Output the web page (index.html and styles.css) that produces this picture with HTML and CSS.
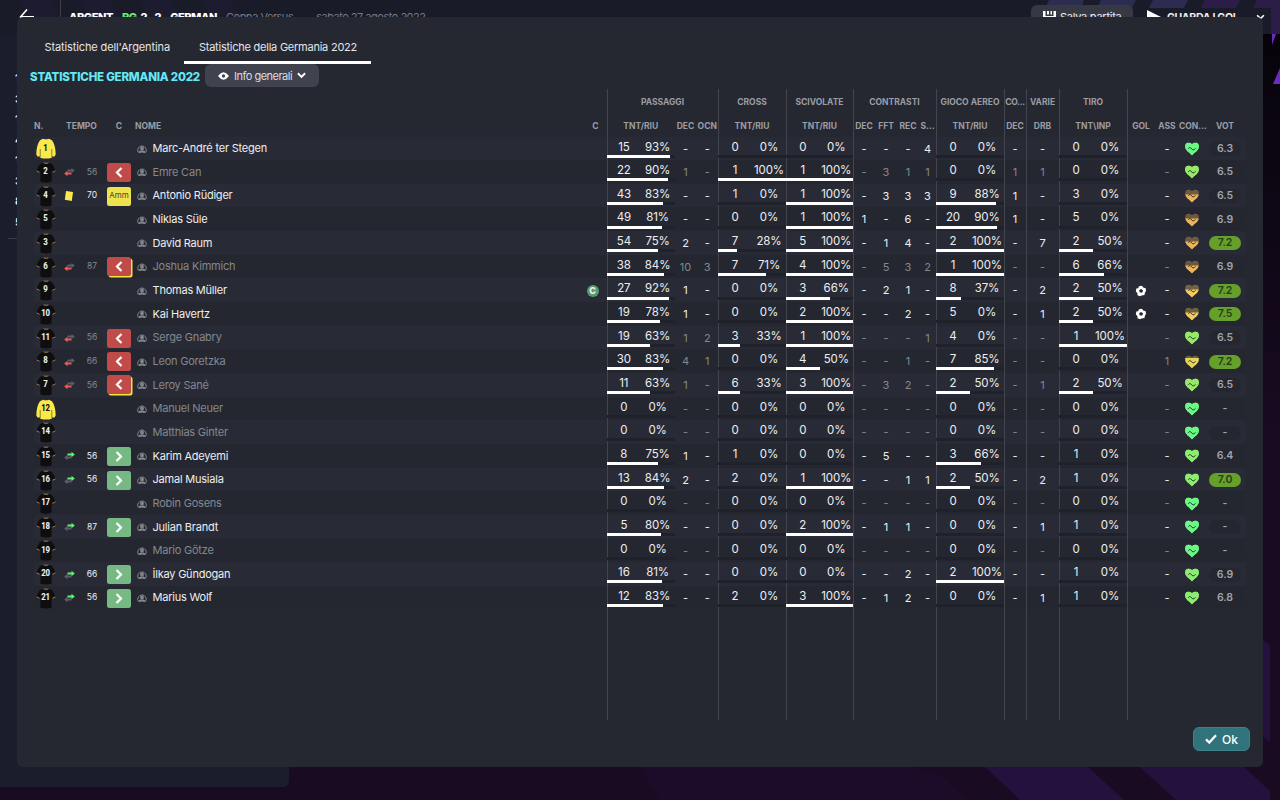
FILE: index.html
```html
<!DOCTYPE html>
<html lang="it">
<head>
  <meta charset="UTF-8">
  <meta name="viewport" content="width=device-width, initial-scale=1.0">
  <title>Statistiche Germania 2022</title>
  <link rel="stylesheet" href="styles.css">
</head>
<body>
  <!-- Backdrop stripes -->
  <svg class="backdrop" viewBox="0 0 1280 800" aria-hidden="true">
    <linearGradient id="edge" x1="0" y1="0" x2="0" y2="1">
      <stop offset="0" stop-color="#050308"/><stop offset="1" stop-color="#180b22"/>
    </linearGradient>
    <rect width="1280" height="800" fill="#180b22"/>
    <rect x="1262" y="0" width="18" height="440" fill="url(#edge)"/>
    <path d="M640 767H911L942 776L968 800H660Z" fill="#1c0c2a"/>
    <path d="M985 767H1088L1124 800H1020ZM1140 767H1244L1270 791V800H1176Z" fill="#24113d"/>
    <path d="M1262 639L1270 645V742L1262 736Z" fill="#24113d"/>
    <path d="M1262 0H1280V34H1262Z" fill="#261f42"/>
    <path d="M1272 34H1276L1272 45Z" fill="#6a2bc0"/>
    <path d="M1280 68V84H1273Z" fill="#6a2bc0"/>
  </svg>

  <!-- Match screen behind the dialog -->
  <header class="topbar">
    <svg class="topbar-stripes" viewBox="0 0 1280 34" aria-hidden="true">
      <g fill="#241c3a" opacity=".45">
        <path d="M20 0H50L70 34H40ZM80 0H110L130 34H100ZM140 0H170L190 34H160ZM200 0H230L250 34H220Z"/>
      </g>
      <path d="M1049 0H1084L1081 8H1045ZM1101 0H1136L1132 8H1097ZM1153 0H1188L1184 8H1149Z" fill="#2b2c50"/>
      <path d="M1205 0H1240L1236 8H1201ZM1257 0H1280V34H1271V8H1253Z" fill="#2c1d48"/>
    </svg>
    <svg class="back" viewBox="0 0 16 16"><path d="M8 .5L1.500 8L8 15.500M1.500 7.700H15" fill="none" stroke="#fff" stroke-width="1.6"/></svg>
    <div class="score"><b>ARGENT</b><b class="green">RG</b><b class="result"><span>2</span><span>-</span><span>2</span></b><b>GERMAN</b></div>
    <span class="cup">Coppa Versus</span>
    <span class="date">sabato 27 agosto 2022</span>
    <div class="save">
      <svg viewBox="0 0 13 13"><path d="M0 0H2.5V5H10.5V0H13V13H0ZM4 0H6V3.5H4ZM7.5 0H9V3.5H7.5Z" fill="#fff"/></svg>
      <span>Salva partita</span>
    </div>
    <div class="watch">
      <svg class="play" viewBox="0 0 14 14"><path d="M0 0L14 7L0 14Z" fill="#fff"/></svg>
      <b>GUARDA I GOL</b>
      <svg class="chev" viewBox="0 0 8 6"><path d="M1 1L4 4L7 1" fill="none" stroke="#fff" stroke-width="1.5"/></svg>
    </div>
  </header>
  <aside class="side">
    <ul><li>1</li><li>3</li><li>1</li><li>4</li><li>1</li><li>3</li><li>8</li><li>5</li></ul>
  </aside>

  <svg width="0" height="0" class="defs">
    <symbol id="shirt" viewBox="0 0 20 21">
      <path d="M7 .8Q10 2 13 .8L16 2.3Q18 4.500 19.600 9L16.500 10.300L15.600 8.500V19.500Q10 21.300 4.400 19.500V8.500L3.500 10.300L.4 9Q2 4.500 4 2.300Z" fill="#0e0e0f"/>
      <path d="M7.500 .9Q10 1.700 12.500 .9M.5 8.900L3.500 10.200M19.500 8.900L16.500 10.200" fill="none" stroke="#a07a4e" stroke-width="1"/>
    </symbol>
    <symbol id="keeper" viewBox="0 0 20 21">
      <path d="M7 .8Q10 1.800 13 .8L16 2.300Q19.500 7 19.700 16.500L18.500 18.500H15.800V19.700Q10 21.500 4.200 19.700V18.500H1.500L.3 16.500Q.5 7 4 2.300Z" fill="#fbe94b"/>
      <path d="M4.200 11V19M15.800 11V19" stroke="#6f6726" stroke-width=".8"/>
    </symbol>
    <symbol id="swap-out" viewBox="0 0 11 9">
      <path d="M3.500 2H7.500V.5L10.800 3L7.500 5.500V4H3.500Z" fill="#5b5e68"/>
      <path d="M7.500 5H3.500V3.300L.2 6L3.500 8.700V7.100H7.500Z" fill="#ee5b57"/>
    </symbol>
    <symbol id="swap-in" viewBox="0 0 11 9">
      <path d="M7.500 5H3.500V3.300L.2 6L3.500 8.700V7.100H7.500Z" fill="#5b5e68"/>
      <path d="M3.500 2H7.500V.3L10.800 3L7.500 5.700V4.100H3.500Z" fill="#5ff377"/>
    </symbol>
    <symbol id="card" viewBox="0 0 11 10">
      <path d="M2 .1L9 1L7.800 9.900L.8 8.800Z" fill="#f9e84c"/>
    </symbol>
    <symbol id="person" viewBox="0 0 10 10">
      <path d="M1.200 8.300A4.300 4.300 0 1 1 8.800 8.300" fill="none" stroke="#85878e" stroke-width="1"/>
      <circle cx="5" cy="4.500" r="1.900" fill="#85878e"/>
      <path d="M1.200 8.800Q1.600 7 3.600 6.600H6.400Q8.400 7 8.800 8.800L7.200 9Q5 7.800 2.800 9Z" fill="#85878e"/>
    </symbol>
    <symbol id="ball" viewBox="0 0 12 12">
      <path d="M4 1.300L7 .8L8.200 2.600L10.700 3.200L11 6L9.800 8L9.500 10L6.500 10.500L5 11.300L2.500 10.200L2.400 8L.8 6.500L1.300 3.500L3.200 3.300Z" fill="#fff"/>
      <path d="M6 4L8 5.300L7.400 7.600H4.800L4.100 5.300Z" fill="#252831"/>
    </symbol>
    <symbol id="pulse" viewBox="0 0 14 13">
      <path d="M3.300 6.300Q4.500 4.300 5.600 5.400L7.800 7.300Q9 8 10.500 5.800" fill="none" stroke="#252831" stroke-width=".9"/>
    </symbol>
    <symbol id="heart" viewBox="0 0 14 13">
      <path d="M7 1.800Q8.300 0 10.600 0Q13.900 .4 13.900 4.100C13.700 8.300 9.500 10 7 13C4.500 10 .3 8.300 .1 4.100Q.1 .4 3.400 0Q5.700 0 7 1.800Z"/>
    </symbol>
  </svg>

  <!-- Dialog -->
  <main class="dialog">
    <nav class="tabs">
      <a class="tab">Statistiche dell'Argentina</a>
      <a class="tab active">Statistiche della Germania 2022</a>
    </nav>
    <div class="title-row">
      <h1>STATISTICHE GERMANIA 2022</h1>
      <button class="view">
        <svg class="eye" viewBox="0 0 12 8"><path d="M0 4Q6 -4 12 4Q6 12 0 4Z" fill="#fff"/><circle cx="6" cy="4" r="1.800" fill="#40434d"/></svg>
        <span>Info generali</span>
        <svg class="chev" viewBox="0 0 8 6"><path d="M.8 1L4 4.200L7.200 1" fill="none" stroke="#fff" stroke-width="1.700"/></svg>
      </button>
    </div>

    <section class="table">
      <div class="groups">
        <span></span><span class="sep">PASSAGGI</span><span class="sep">CROSS</span><span class="sep">SCIVOLATE</span>
        <span class="sep">CONTRASTI</span><span class="sep">GIOCO AEREO</span><span class="sep tight">CO...</span>
        <span class="sep">VARIE</span><span class="sep">TIRO</span><span class="sep"></span>
      </div>
      <div class="grid head">
        <span class="left">N.</span><span class="tempo">TEMPO</span><span>C</span><span class="left">NOME</span><span class="cap-head">C</span>
        <span class="sep">TNT/RIU</span><span>DEC</span><span>OCN</span>
        <span class="sep">TNT/RIU</span><span class="sep">TNT/RIU</span>
        <span class="sep">DEC</span><span>FFT</span><span>REC</span><span>S...</span>
        <span class="sep">TNT/RIU</span><span class="sep">DEC</span><span class="sep">DRB</span>
        <span class="sep">TNT\INP</span><span class="sep">GOL</span><span>ASS</span><span>CON...</span><span>VOT</span>
      </div>
      <div id="rows"></div>
      <div class="groups rest">
        <span></span><span class="sep"></span><span class="sep"></span><span class="sep"></span><span class="sep"></span>
        <span class="sep"></span><span class="sep"></span><span class="sep"></span><span class="sep"></span><span class="sep"></span>
      </div>
    </section>

    <footer>
      <button class="ok">
        <svg viewBox="0 0 12 10"><path d="M1 5.300L4.300 8.500L11 1.200" fill="none" stroke="#fff" stroke-width="2.300"/></svg>
        <span>Ok</span>
      </button>
    </footer>
  </main>

  <script src="script.js"></script>
</body>
</html>
```
FILE: styles.css
```css
* {
  margin: 0;
  padding: 0;
  box-sizing: border-box;
}

body {
  width: 1280px;
  height: 800px;
  overflow: hidden;
  position: relative;
  background: #180b22;
  color: #eeeef0;
  font-family: Inter, "Liberation Sans", sans-serif;
  font-size: 11px;
}

svg {
  display: block;
  flex: none;
}

.defs {
  position: absolute;
}

.backdrop {
  position: absolute;
  inset: 0;
  width: 1280px;
  height: 800px;
}

/* Match screen behind the dialog */
.topbar {
  position: relative;
  height: 34px;
  width: 1271px;
  background: #191b28;
  display: flex;
  align-items: center;
  padding-left: 19px;
  white-space: nowrap;
}

.topbar-stripes {
  position: absolute;
  left: 0;
  top: 0;
  width: 1280px;
  height: 34px;
}

.topbar > * {
  z-index: 1;
}

.topbar > .topbar-stripes {
  z-index: 0;
}

.back {
  width: 16px;
  height: 16px;
}

.score {
  display: flex;
  gap: 9px;
  width: 157px;
  margin-left: 25px;
  padding-left: 8px;
  height: 34px;
  align-items: center;
  border-left: 1px solid #3c3d4b;
  font-size: 11px;
  letter-spacing: -0.45px;
  color: #fff;
}

.score b {
  font-weight: 800;
}

.score .green {
  color: #68ec72;
  margin-right: -5px;
}

.score .result {
  display: flex;
  justify-content: space-between;
  width: 21px;
}

.cup,
.date {
  color: #777985;
  margin-left: 9px;
  letter-spacing: -0.5px;
}

.date {
  margin-left: 23px;
}

.save {
  display: flex;
  align-items: center;
  gap: 4px;
  width: 102px;
  height: 24px;
  padding-left: 12px;
  margin-left: auto;
  border-radius: 6px;
  background: #363843;
  letter-spacing: -0.25px;
}

.save svg {
  width: 13px;
  height: 13px;
}

.watch {
  display: flex;
  align-items: center;
  width: 124px;
  margin: 0 0 0 14px;
}

.watch b {
  margin-left: 6px;
  font-size: 10.5px;
  letter-spacing: -0.3px;
}

.play {
  width: 14px;
  height: 14px;
}

.watch .chev {
  width: 9px;
  height: 7px;
  margin-left: auto;
  margin-right: 6px;
}

.side {
  width: 289px;
  height: 753px;
  position: relative;
  border-radius: 0 0 6px 0;
  background: #1c1d2c;
}

.side ul {
  list-style: none;
  width: 30px;
  margin-left: 8px;
  padding: 34px 0 6px 7px;
  border-bottom: 1px solid #3a3c49;
}

.side li {
  height: 20.5px;
  line-height: 20.5px;
  font-weight: 700;
}

/* Dialog */
.dialog {
  position: absolute;
  z-index: 2;
  left: 17px;
  top: 17px;
  width: 1246px;
  height: 750px;
  border-radius: 6px;
  background: #252831;
  display: flex;
  flex-direction: column;
}

.tabs {
  display: flex;
  height: 47px;
  padding: 13px 0 0 13px;
}

.tab {
  height: 34px;
  padding: 0 14.5px;
  line-height: 34px;
  letter-spacing: -0.12px;
  color: #e4e5e8;
}

.tab.active {
  padding-right: 14px;
  letter-spacing: -0.24px;
  border-bottom: 3px solid #fff;
}

.title-row {
  display: flex;
  align-items: center;
  height: 25px;
  padding-left: 13px;
}

h1 {
  width: 175px;
  font-size: 11.5px;
  font-weight: 800;
  white-space: nowrap;
  letter-spacing: -0.2px;
  color: #64e9f5;
}

.view {
  display: flex;
  align-items: center;
  width: 114px;
  height: 23px;
  margin-top: -2px;
  padding: 0 13px;
  border: 0;
  border-radius: 6px;
  background: #40434d;
  color: #dcdde0;
  font: inherit;
  letter-spacing: -0.5px;
  white-space: nowrap;
}

.eye {
  width: 11px;
  height: 8px;
  margin-right: 5px;
}

.view .chev {
  width: 9px;
  height: 7px;
  margin-left: auto;
}

/* Table */
.table {
  height: 631px;
  margin-left: 17px;
  display: flex;
  flex-direction: column;
}

.sep {
  box-shadow: inset 1px 0 #42444e;
}

.groups {
  display: grid;
  flex: none;
  height: 25px;
  grid-template-columns: 573px 111px 68px 67px 83px 68px 22px 33px 68px 119px;
}

.groups,
.head {
  font-size: 8.5px;
  font-weight: 700;
  color: #9c9da3;
  text-align: center;
  line-height: 27px;
  white-space: nowrap;
}

.rest {
  flex: 1;
}

.groups .tight {
  letter-spacing: -0.3px;
}

.grid {
  display: grid;
  grid-template-columns: 23px 24px 22px 32px 447px 25px 67.5px 22px 21.5px 68px 67px 22px 22px 22px 17px 68px 22px 33px 68px 28px 24px 25px 42px;
}

.head {
  height: 22.5px;
  line-height: 24px;
}

.head .tempo {
  grid-column: span 2;
  padding-left: 3px;
}

.head .left {
  text-align: left;
}

.head .cap-head {
  padding-left: 2px;
}

.row {
  height: 23.66px;
  line-height: 23.66px;
  width: 1212px;
  border-radius: 4px;
  text-align: center;
  background: #242730;
}

.row:nth-child(odd) {
  background: #282b35;
}

.row > div {
  display: flex;
  align-items: center;
  justify-content: center;
  position: relative;
}

.row .name {
  justify-content: flex-start;
  padding-left: 2px;
  gap: 5.5px;
  font-size: 11px;
  letter-spacing: -0.22px;
}

.name svg {
  width: 10px;
  height: 10px;
}

.shirt svg {
  width: 20px;
  height: 21px;
}

.shirt span {
  position: absolute;
  inset: -1px 0 0;
  font-family: Roboto, sans-serif;
  font-size: 9.5px;
  font-weight: 800;
  letter-spacing: -0.3px;
  transform: scaleX(0.82);
}

.shirt.gk span {
  color: #111;
}

.event svg {
  width: 11px;
  height: 10px;
}

.minute {
  font-size: 8.5px;
}

.badge {
  width: 24px;
  height: 19px;
  border-radius: 2.5px;
  display: flex;
  align-items: center;
  justify-content: center;
}

.badge svg {
  width: 8px;
  height: 11px;
}

.badge.out,
.badge.booked {
  background: #c04b49;
}

.badge.booked {
  margin: -1px 0 0 -1px;
  box-shadow: 1.5px 1.5px #f5e43c;
}

.badge.in {
  background: #77b982;
}

.badge.amm {
  background: #eee24f;
  color: #4b4a25;
  font-size: 8px;
}

.captain {
  width: 12px;
  height: 12px;
  margin-right: 4px;
  border-radius: 50%;
  background: #559b6c;
  font-size: 9px;
  font-weight: 800;
  line-height: 12px;
}

.row .pct {
  display: grid;
  grid-template-columns: 1fr 1fr;
  justify-content: stretch;
  font-size: 11.5px;
  letter-spacing: -0.1px;
  line-height: 21px;
  align-items: start;
}

.track {
  position: absolute;
  left: 0;
  right: 0;
  bottom: 3.6px;
  height: 3px;
  background: #20222b;
}

.fill {
  height: 3px;
  background: #fff;
}

.num {
  padding-top: 1px;
}

.row.dim .name,
.row.dim .num,
.row.dim .minute {
  color: #85878e;
}

.ball svg {
  width: 12px;
  height: 12px;
}

.health svg {
  width: 14px;
  height: 14px;
}

.vote span {
  width: 32px;
  height: 14px;
  border-radius: 7px;
  line-height: 14px;
  font-weight: 600;
  font-size: 10.5px;
  color: #a2a4aa;
  background: #242730;
}

.vote .good {
  background: #679f2b;
  color: #25401a;
}

footer {
  display: flex;
  justify-content: flex-end;
  padding: 7px 13px 0;
}

.ok {
  display: flex;
  align-items: center;
  justify-content: center;
  gap: 5px;
  width: 57px;
  height: 24px;
  border: 1px solid #3f8089;
  border-radius: 6px;
  background: #31737c;
  color: #fff;
  font: 500 12px Inter, sans-serif;
}

.ok svg {
  width: 12px;
  height: 10px;
}
```
FILE: script.js
```js
// number, event, minute, badge, name, stats..., goal, assists, condition, vote
// pairs [attempts, percent] are drawn with a bar
const players = [
  ['1', '', '', '', 'Marc-André ter Stegen', [15, 93], '-', '-', [0, 0], [0, 0], '-', '-', '-', '4', [0, 0], '-', '-', [0, 0], 0, '-', 'full', '6.3'],
  ['2', 'swap-out', '56', 'out', 'Emre Can', [22, 90], '1', '-', [1, 100], [1, 100], '-', '3', '1', '1', [0, 0], '1', '1', [0, 0], 0, '-', 'good', '6.5'],
  ['4', 'card', '70', 'amm', 'Antonio Rüdiger', [43, 83], '-', '-', [1, 0], [1, 100], '-', '3', '3', '3', [9, 88], '1', '-', [3, 0], 0, '-', 'low', '6.5'],
  ['5', '', '', '', 'Niklas Süle', [49, 81], '-', '-', [0, 0], [1, 100], '1', '-', '6', '-', [20, 90], '1', '-', [5, 0], 0, '-', 'low', '6.9'],
  ['3', '', '', '', 'David Raum', [54, 75], '2', '-', [7, 28], [5, 100], '-', '1', '4', '-', [2, 100], '-', '7', [2, 50], 0, '-', 'low', '7.2'],
  ['6', 'swap-out', '87', 'booked', 'Joshua Kimmich', [38, 84], '10', '3', [7, 71], [4, 100], '-', '5', '3', '2', [1, 100], '-', '-', [6, 66], 0, '-', 'low', '6.9'],
  ['9', '', '', '', 'Thomas Müller', [27, 92], '1', '-', [0, 0], [3, 66], '-', '2', '1', '-', [8, 37], '-', '2', [2, 50], 1, '-', 'mid', '7.2'],
  ['10', '', '', '', 'Kai Havertz', [19, 78], '1', '-', [0, 0], [2, 100], '-', '-', '2', '-', [5, 0], '-', '1', [2, 50], 1, '-', 'mid', '7.5'],
  ['11', 'swap-out', '56', 'out', 'Serge Gnabry', [19, 63], '1', '2', [3, 33], [1, 100], '-', '-', '-', '1', [4, 0], '-', '-', [1, 100], 0, '-', 'good', '6.5'],
  ['8', 'swap-out', '66', 'out', 'Leon Goretzka', [30, 83], '4', '1', [0, 0], [4, 50], '-', '-', '1', '-', [7, 85], '-', '-', [0, 0], 0, '1', 'fair', '7.2'],
  ['7', 'swap-out', '56', 'booked', 'Leroy Sané', [11, 63], '1', '-', [6, 33], [3, 100], '-', '3', '2', '-', [2, 50], '-', '1', [2, 50], 0, '-', 'good', '6.5'],
  ['12', '', '', '', 'Manuel Neuer', [0, 0], '-', '-', [0, 0], [0, 0], '-', '-', '-', '-', [0, 0], '-', '-', [0, 0], 0, '-', 'full', '-'],
  ['14', '', '', '', 'Matthias Ginter', [0, 0], '-', '-', [0, 0], [0, 0], '-', '-', '-', '-', [0, 0], '-', '-', [0, 0], 0, '-', 'full', '-'],
  ['15', 'swap-in', '56', 'in', 'Karim Adeyemi', [8, 75], '1', '-', [1, 0], [0, 0], '-', '5', '-', '-', [3, 66], '-', '-', [1, 0], 0, '-', 'fine', '6.4'],
  ['16', 'swap-in', '56', 'in', 'Jamal Musiala', [13, 84], '2', '-', [2, 0], [1, 100], '-', '-', '1', '1', [2, 50], '-', '2', [1, 0], 0, '-', 'fine', '7.0'],
  ['17', '', '', '', 'Robin Gosens', [0, 0], '-', '-', [0, 0], [0, 0], '-', '-', '-', '-', [0, 0], '-', '-', [0, 0], 0, '-', 'full', '-'],
  ['18', 'swap-in', '87', 'in', 'Julian Brandt', [5, 80], '-', '-', [0, 0], [2, 100], '-', '1', '1', '-', [0, 0], '-', '1', [1, 0], 0, '-', 'full', '-'],
  ['19', '', '', '', 'Mario Götze', [0, 0], '-', '-', [0, 0], [0, 0], '-', '-', '-', '-', [0, 0], '-', '-', [0, 0], 0, '-', 'full', '-'],
  ['20', 'swap-in', '66', 'in', 'İlkay Gündogan', [16, 81], '-', '-', [0, 0], [0, 0], '-', '-', '2', '-', [2, 100], '-', '-', [1, 0], 0, '-', 'fine', '6.9'],
  ['21', 'swap-in', '56', 'in', 'Marius Wolf', [12, 83], '-', '-', [2, 0], [3, 100], '-', '1', '2', '-', [0, 0], '-', '1', [1, 0], 0, '-', 'fine', '6.8'],
];

const keepers = ['1', '12'];
const unused = ['12', '14', '17', '19'];

// colour and how far down the heart is drained
const condition = {
  full: ['#6bf783', 0],
  good: ['#97e869', 0],
  fine: ['#8cec70', 0],
  fair: ['#e5d458', 2.5],
  mid: ['#f4cb5c', 5],
  low: ['#f0b458', 5],
};

const use = (id) => `<svg><use href="#${id}"/></svg>`;
const arrow = (d) => `<svg viewBox="0 0 8 11"><path d="${d}" fill="none" stroke="#fff" stroke-width="2.2"/></svg>`;

function badge(type) {
  if (!type) return '';
  let inner = arrow('M6.500 1L2 5.500L6.500 10');
  if (type === 'in') inner = arrow('M1.500 1L6 5.500L1.500 10');
  if (type === 'amm') inner = 'Amm';
  return `<span class="badge ${type}">${inner}</span>`;
}

function stat(value, sep) {
  const cls = sep ? ' sep' : '';
  if (!Array.isArray(value)) return `<div class="num${cls}">${value}</div>`;
  return `<div class="pct${cls}"><span>${value[0]}</span><span>${value[1]}%</span>
    <div class="track"><div class="fill" style="width: ${value[1]}%"></div></div></div>`;
}

function heart(state) {
  const [color, drained] = condition[state];
  return `<svg viewBox="0 0 14 13"><use href="#heart" fill="${color}" opacity="${drained ? 0.35 : 1}"/>
    <use href="#heart" fill="${color}" style="clip-path: inset(${drained}px 0 0 0)"/><use href="#pulse"/></svg>`;
}

const rows = document.getElementById('rows');
const separated = [0, 3, 4, 5, 9, 10, 11, 12];

players.forEach((p) => {
  const [no, event, minute, mark, name] = p;
  const [goal, assists, state, vote] = p.slice(18);
  const off = mark === 'out' || mark === 'booked' || unused.includes(no);
  const gk = keepers.includes(no);
  const row = document.createElement('div');
  row.className = 'row grid' + (off ? ' dim' : '');
  row.innerHTML = `
    <div class="shirt${gk ? ' gk' : ''}">${use(gk ? 'keeper' : 'shirt')}<span>${no}</span></div>
    <div class="event">${event ? use(event) : ''}</div>
    <div class="minute">${minute}</div>
    <div>${badge(mark)}</div>
    <div class="name">${use('person')}<span>${name}</span></div>
    <div>${no === '9' ? '<span class="captain">C</span>' : ''}</div>
    ${p.slice(5, 18).map((v, i) => stat(v, separated.includes(i))).join('')}
    <div class="ball sep">${goal ? use('ball') : ''}</div>
    <div class="num">${assists}</div>
    <div class="health">${heart(state)}</div>
    <div class="vote"><span class="${Number(vote) >= 7 ? 'good' : ''}">${vote}</span></div>`;
  rows.appendChild(row);
});
```
